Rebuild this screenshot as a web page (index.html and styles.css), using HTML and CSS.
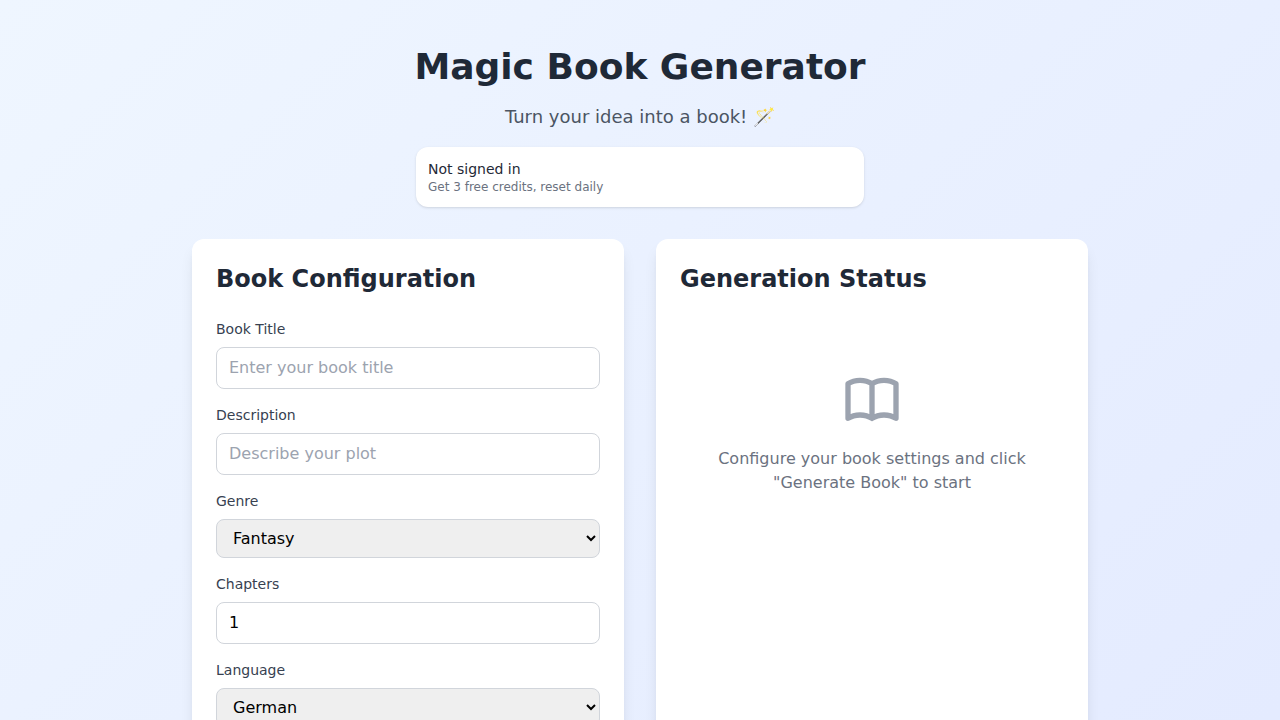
FILE: index.html
```html
<!DOCTYPE html>
<html lang="en">
<head>
  <meta charset="UTF-8">
  <meta name="viewport" content="width=device-width, initial-scale=1.0">
  <title>Magic Book Generator</title>
  <link rel="stylesheet" href="styles.css">
</head>
<body>

<div class="container">
  <header class="header">
    <h1>Magic Book Generator</h1>
    <p class="tagline">Turn your idea into a book! 🪄</p>
    <div class="account">
      <div class="account-status">Not signed in</div>
      <div class="account-credits">Get 3 free credits, reset daily</div>
    </div>
  </header>

  <main class="panels">
    <section class="card">
      <h2>Book Configuration</h2>
      <form class="book-form">
        <div class="field">
          <label for="title">Book Title</label>
          <input type="text" id="title" placeholder="Enter your book title">
        </div>
        <div class="field">
          <label for="description">Description</label>
          <input type="text" id="description" placeholder="Describe your plot">
        </div>
        <div class="field">
          <label for="genre">Genre</label>
          <select id="genre">
            <option>Fantasy</option>
          </select>
        </div>
        <div class="field">
          <label for="chapters">Chapters</label>
          <input type="number" id="chapters" min="1" value="1">
        </div>
        <div class="field">
          <label for="language">Language</label>
          <select id="language">
            <option>German</option>
          </select>
        </div>
      </form>
    </section>

    <section class="card">
      <h2>Generation Status</h2>
      <div class="empty-state">
        <svg class="book-icon" viewBox="0 0 24 24" fill="none" stroke="currentColor" stroke-width="2" stroke-linecap="round" stroke-linejoin="round">
          <path d="M12 6.253v13m0-13C10.832 5.477 9.246 5 7.5 5S4.168 5.477 3 6.253v13C4.168 18.477 5.754 18 7.5 18s3.332.477 4.5 1.253m0-13C13.168 5.477 14.754 5 16.5 5c1.747 0 3.332.477 4.5 1.253v13C19.832 18.477 18.247 18 16.5 18c-1.746 0-3.332.477-4.5 1.253"/>
        </svg>
        <p>Configure your book settings and click "Generate Book" to start</p>
      </div>
    </section>
  </main>
</div>

</body>
</html>
```
FILE: styles.css
```css
* {
  box-sizing: border-box;
}

body {
  margin: 0;
  min-height: 100vh;
  background: linear-gradient(135deg, #eff6ff, #e2e9ff);
  color: #1f2937;
  font-family: "DejaVu Sans", sans-serif;
  font-size: 16px;
  line-height: 24px;
}

h1, h2, p {
  margin: 0;
}

.container {
  max-width: 928px;
  margin: 0 auto;
  padding: 47px 16px 320px;
}

.header {
  margin-bottom: 32px;
  text-align: center;
}

h1 {
  margin-bottom: 16px;
  font-size: 36px;
  line-height: 40px;
}

.tagline {
  color: #4b5563;
  font-size: 18px;
  line-height: 28px;
}

.account {
  max-width: 448px;
  margin: 16px auto 0;
  padding: 12px;
  background: #fff;
  border-radius: 12px;
  box-shadow: 0 1px 3px rgba(0, 0, 0, 0.1), 0 1px 2px -1px rgba(0, 0, 0, 0.1);
  text-align: left;
}

.account-status {
  font-size: 14px;
  line-height: 20px;
}

.account-credits {
  color: #6b7280;
  font-size: 12px;
  line-height: 16px;
}

.panels {
  display: grid;
  grid-template-columns: repeat(2, minmax(0, 1fr));
  gap: 32px;
}

.card {
  padding: 24px;
  background: #fff;
  border-radius: 12px;
  box-shadow: 0 10px 15px -3px rgba(0, 0, 0, 0.1), 0 4px 6px -4px rgba(0, 0, 0, 0.1);
}

h2 {
  margin-bottom: 24px;
  font-size: 24px;
  line-height: 32px;
}

.book-form {
  display: grid;
  gap: 16px;
}

label {
  display: block;
  margin-bottom: 8px;
  color: #374151;
  font-size: 14px;
  line-height: 20px;
}

input, select {
  display: block;
  width: 100%;
  padding: 8px 12px;
  border: 1px solid #d1d5db;
  border-radius: 8px;
  font: inherit;
}

input {
  background: #fff;
}

select {
  background: #efefef;
  color: #000;
}

input::placeholder {
  color: #9ca3af;
}

.empty-state {
  padding: 48px 0;
  color: #6b7280;
  text-align: center;
}

.book-icon {
  display: block;
  width: 64px;
  height: 64px;
  margin: 0 auto 16px;
  color: #9ca3af;
}

@media (max-width: 760px) {
  .panels {
    grid-template-columns: 1fr;
  }
}
```
